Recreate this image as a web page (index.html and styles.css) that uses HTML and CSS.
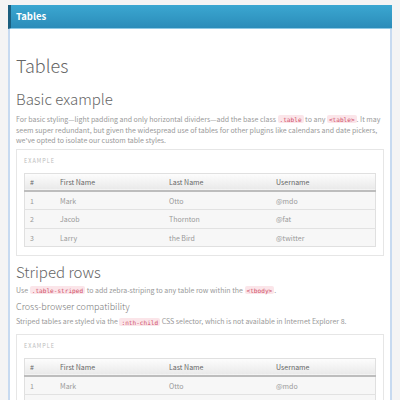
FILE: index.html
```html
<!DOCTYPE html>
<html>
<head>
<meta charset="utf-8">
<link rel="stylesheet" href="styles.css">
</head>
<body>
<div class="window">
  <div class="panel-head">Tables</div>
  <div class="panel-body">
    <h1 class="title">Tables</h1>
    <h2 class="section first">Basic example</h2>
    <p class="text p1">For basic styling—light padding and only horizontal dividers—add the base class <code>.table</code> to any <code>&lt;table&gt;</code>. It may seem super redundant, but given the widespread use of tables for other plugins like calendars and date pickers, we've opted to isolate our custom table styles.</p>
    <div class="example">
      <div class="example-label">EXAMPLE</div>
      <table class="table">
        <thead><tr><th class="c1">#</th><th class="c2">First Name</th><th class="c3">Last Name</th><th>Username</th></tr></thead>
        <tbody>
          <tr><td>1</td><td>Mark</td><td>Otto</td><td>@mdo</td></tr>
          <tr><td>2</td><td>Jacob</td><td>Thornton</td><td>@fat</td></tr>
          <tr><td>3</td><td>Larry</td><td>the Bird</td><td>@twitter</td></tr>
        </tbody>
      </table>
    </div>
    <h2 class="section second">Striped rows</h2>
    <p class="text p2">Use <code>.table-striped</code> to add zebra-striping to any table row within the <code>&lt;tbody&gt;</code>.</p>
    <h3 class="sub">Cross-browser compatibility</h3>
    <p class="text p3">Striped tables are styled via the <code>:nth-child</code> CSS selector, which is not available in Internet Explorer 8.</p>
    <div class="example ex2">
      <div class="example-label">EXAMPLE</div>
      <table class="table">
        <thead><tr><th class="c1">#</th><th class="c2">First Name</th><th class="c3">Last Name</th><th>Username</th></tr></thead>
        <tbody>
          <tr><td>1</td><td>Mark</td><td>Otto</td><td>@mdo</td></tr>
          <tr><td>2</td><td>Jacob</td><td>Thornton</td><td>@fat</td></tr>
          <tr><td>3</td><td>Larry</td><td>the Bird</td><td>@twitter</td></tr>
        </tbody>
      </table>
    </div>
  </div>
</div>
</body>
</html>
```
FILE: styles.css
```css
html, body {
  margin: 0;
  padding: 0;
  background: #f4f4f4;
  overflow: hidden;
  height: 400px;
}
body {
  padding: 5px 8px 0;
  font-family: "Noto Sans CJK KR", "Noto Sans", sans-serif;
  color: #888;
}
.window {
  height: 395px;
  display: flex;
  flex-direction: column;
}
.panel-head {
  height: 23px;
  line-height: 23px;
  background: linear-gradient(#3ba7d1, #2b8cb9);
  border-left: 3px solid #1b5f7f;
  border-bottom: 1px solid #8dc8e4;
  color: #fff;
  font-weight: 700;
  font-size: 9.5px;
  padding-left: 5px;
  flex: none;
}
.panel-body {
  flex: 1;
  background: #fff;
  border-left: 2px solid #c7daf0;
  border-right: 2px solid #c7daf0;
  padding: 0 6px;
  overflow: hidden;
}
.title {
  margin: 24.8px 0 0;
  font-size: 18px;
  font-weight: 300;
  color: #666;
  line-height: 22px;
}
.section {
  font-size: 15px;
  font-weight: 300;
  color: #666;
  line-height: 18px;
}
.first { margin: 14.7px 0 0; }
.second { margin: 7.5px 0 0; }
.sub {
  margin: 5px 0 0;
  font-size: 9px;
  font-weight: 300;
  color: #777;
  line-height: 12px;
}
.text {
  font-size: 7px;
  line-height: 10px;
  color: #999;
}
.p1 { margin: 5.5px 0 0; }
.p2 { margin: 3.5px 0 0; }
.p3 { margin: 3.3px 0 0; }
code {
  font-family: "DejaVu Sans Mono", monospace;
  font-size: 6.1px;
  color: #d0506a;
  background: #fbe5e9;
  padding: 0.5px 2px;
  border-radius: 2px;
}
.example {
  margin-top: 4px;
  border: 1px solid #e6e6e6;
  padding: 7px 7px 7.5px;
}
.ex2 { margin-top: 6.7px; }
.example-label {
  font-size: 5.5px;
  letter-spacing: 1px;
  color: #bbb;
  line-height: 8px;
  margin: 0 0 8px;
}
.table {
  width: 100%;
  border-collapse: collapse;
  font-size: 7px;
  border: 1px solid #e0e0e0;
}
.table th {
  text-align: left;
  font-weight: 400;
  color: #666;
  height: 16px;
  padding: 0 6px 0 5px;
  background: linear-gradient(#fdfdfd, #e9e9e9);
  border-bottom: 2px solid #bdbdbd;
}
.table td {
  height: 17.5px;
  padding: 0 6px 0 5px;
  background: #f7f7f7;
  color: #999;
  border-top: 1px solid #e2e2e2;
}
.c1 { width: 19px; }
.c2 { width: 98px; }
.c3 { width: 96px; }
```
